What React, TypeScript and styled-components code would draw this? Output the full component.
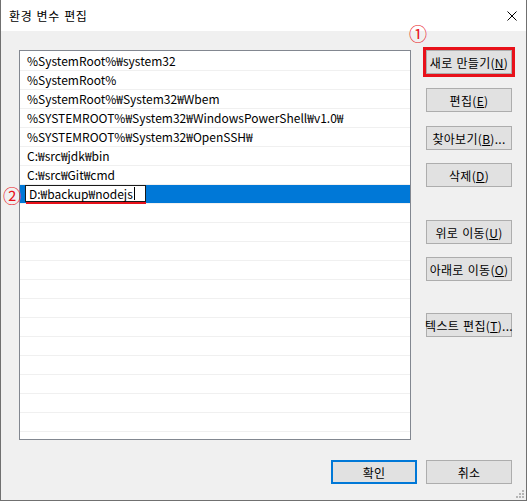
import React from 'react';
import styled, { createGlobalStyle } from 'styled-components';

const GlobalStyle = createGlobalStyle`
  html, body {
    margin: 0;
    padding: 0;
    background: #ffffff;
  }
`;

const Window = styled.div`
  position: relative;
  box-sizing: border-box;
  width: 527px;
  height: 501px;
  display: flex;
  flex-direction: column;
  background: #f0f0f0;
  border: 1px solid #707070;
  border-top: none;
  font-family: "Noto Sans CJK KR", "Noto Sans", sans-serif;
  font-size: 12px;
  color: #000;
  overflow: hidden;
`;

const TitleBar = styled.div`
  height: 31px;
  flex: none;
  display: flex;
  align-items: center;
  justify-content: space-between;
  padding: 0 9px 0 8px;
  background: #ffffff;
`;

const Title = styled.span`
  font-size: 12px;
  letter-spacing: 0.6px;
  word-spacing: 1px;
`;

const Body = styled.div`
  flex: 1;
  display: flex;
  flex-direction: column;
  padding: 19px 14px 16px 18px;
`;

const Main = styled.div`
  display: flex;
  gap: 15px;
  height: 390px;
`;

const List = styled.div`
  box-sizing: border-box;
  width: 392px;
  height: 390px;
  padding-top: 1px;
  background: #ffffff;
  border: 1px solid #828790;
  overflow: hidden;
`;

const Row = styled.div<{ $selected?: boolean }>`
  height: 18px;
  line-height: 18px;
  border-bottom: 1px solid #f0f0f0;
  white-space: nowrap;
  background: ${p => (p.$selected ? '#0078d7' : 'transparent')};
  padding-left: ${p => (p.$selected ? '5px' : '7px')};
`;

const EditBox = styled.div`
  box-sizing: border-box;
  width: 121px;
  height: 17px;
  line-height: 15px;
  padding-left: 3px;
  background: #ffffff;
  border: 1px solid #1a1a1a;
  display: flex;
  align-items: center;
`;

const Caret = styled.span`
  display: inline-block;
  width: 1px;
  height: 13px;
  margin-left: 1px;
  background: #000;
`;

const Side = styled.div`
  width: 86px;
  display: flex;
  flex-direction: column;
`;

const Button = styled.button<{ $top?: number; $marked?: boolean; $default?: boolean }>`
  box-sizing: border-box;
  width: 86px;
  height: 24px;
  padding: 0;
  margin-top: ${p => p.$top ?? 0}px;
  background: #e1e1e1;
  border: ${p => (p.$default ? '2px solid #0078d7' : '1px solid #adadad')};
  outline: ${p => (p.$marked ? '3px solid #e8111a' : 'none')};
  font-family: "Noto Sans CJK KR", "Noto Sans", sans-serif;
  font-size: 12px;
  letter-spacing: 0.3px;
  word-spacing: 1px;
  color: #000;
  white-space: nowrap;
  display: flex;
  align-items: center;
  justify-content: center;
`;

const Footer = styled.div`
  display: flex;
  justify-content: flex-end;
  gap: 9px;
  margin-top: 20px;
`;

const Mark = styled.span<{ $x: number; $y: number }>`
  position: absolute;
  left: ${p => p.$x}px;
  top: ${p => p.$y}px;
  font-size: 18px;
  line-height: 18px;
  color: #e8111a;
`;

const Underline = styled.div`
  position: absolute;
  left: 25px;
  top: 202px;
  width: 120px;
  height: 2px;
  background: #e8111a;
`;

const Grip = styled.svg`
  position: absolute;
  right: 2px;
  bottom: 2px;
`;

const paths = [
  '%SystemRoot%₩system32',
  '%SystemRoot%',
  '%SystemRoot%₩System32₩Wbem',
  '%SYSTEMROOT%₩System32₩WindowsPowerShell₩v1.0₩',
  '%SYSTEMROOT%₩System32₩OpenSSH₩',
  'C:₩src₩jdk₩bin',
  'C:₩src₩Git₩cmd',
];

const sideButtons: { label: string; key: string; tail?: string; top: number; marked?: boolean }[] = [
  { label: '새로 만들기', key: 'N', top: 0, marked: true },
  { label: '편집', key: 'E', top: 14 },
  { label: '찾아보기', key: 'B', tail: '...', top: 14 },
  { label: '삭제', key: 'D', top: 13 },
  { label: '위로 이동', key: 'U', top: 33 },
  { label: '아래로 이동', key: 'O', top: 13 },
  { label: '텍스트 편집', key: 'T', tail: '...', top: 32 },
];

export default function App() {
  const empty = Array.from({ length: 13 });
  return (
    <>
      <GlobalStyle />
      <Window>
        <TitleBar>
          <Title>환경 변수 편집</Title>
          <svg width="10" height="10" viewBox="0 0 10 10">
            <path d="M0.5 0.5 L9.5 9.5 M9.5 0.5 L0.5 9.5" stroke="#000" strokeWidth="1" fill="none" />
          </svg>
        </TitleBar>
        <Body>
          <Main>
            <List>
              {paths.map(p => (
                <Row key={p}>{p}</Row>
              ))}
              <Row $selected>
                <EditBox>
                  D:₩backup₩nodejs
                  <Caret />
                </EditBox>
              </Row>
              {empty.map((_, i) => (
                <Row key={i} />
              ))}
            </List>
            <Side>
              {sideButtons.map(b => (
                <Button key={b.key} $top={b.top} $marked={b.marked}>
                  {b.label}(<u>{b.key}</u>){b.tail}
                </Button>
              ))}
            </Side>
          </Main>
          <Footer>
            <Button $default>확인</Button>
            <Button>취소</Button>
          </Footer>
        </Body>
        <Mark $x={408} $y={24}>①</Mark>
        <Mark $x={2} $y={186}>②</Mark>
        <Underline />
        <Grip width="9" height="9" viewBox="0 0 9 9">
          <g fill="#b5b5b5">
            <rect x="7" y="1" width="2" height="2" />
            <rect x="4" y="4" width="2" height="2" />
            <rect x="7" y="4" width="2" height="2" />
            <rect x="1" y="7" width="2" height="2" />
            <rect x="4" y="7" width="2" height="2" />
            <rect x="7" y="7" width="2" height="2" />
          </g>
        </Grip>
      </Window>
    </>
  );
}
